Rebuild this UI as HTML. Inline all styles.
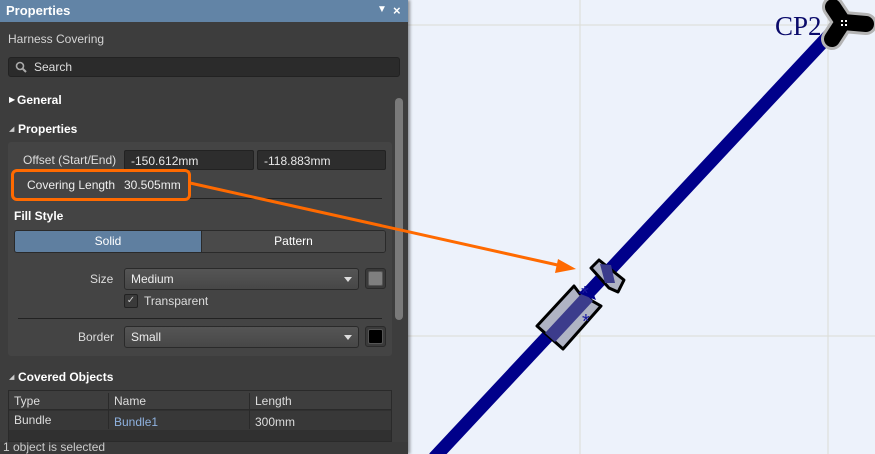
<!DOCTYPE html>
<html><head><meta charset="utf-8"><style>
*{margin:0;padding:0;box-sizing:border-box}
body{width:875px;height:454px;overflow:hidden;position:relative;background:#edf2fb;font-family:"Liberation Sans",sans-serif;font-size:12px;color:#ddd}
.a{position:absolute;white-space:nowrap}
.b{font-weight:bold;color:#fff}
.inp{position:absolute;background:#2d2d2d;border:1px solid #222;border-radius:2px;color:#e8e8e8;padding:3px 6px;font-size:12px}
.dd{position:absolute;background:linear-gradient(#555,#474747);border:1px solid #2a2a2a;border-radius:3px;color:#eee;padding:3px 6px;height:22px}
.dd:after{content:"";position:absolute;right:6px;top:8px;border:4px solid transparent;border-top:5px solid #ddd}
.sw{position:absolute;width:21px;height:21px;border:1px solid #2a2a2a;border-radius:3px;background:#3a3a3a;padding:2px}
.sw div{width:100%;height:100%;border:1px solid #555;border-radius:2px}
</style></head><body>
<svg class="a" style="left:0;top:0" width="875" height="454">
<line x1="580" y1="0" x2="580" y2="454" stroke="#dcdcd6" stroke-width="1"/>
<line x1="828" y1="0" x2="828" y2="454" stroke="#dcdcd6" stroke-width="1"/>
<line x1="408" y1="25" x2="875" y2="25" stroke="#dcdcd6" stroke-width="1"/>
<line x1="408" y1="336" x2="875" y2="336" stroke="#dcdcd6" stroke-width="1"/>
<line x1="434" y1="458" x2="834" y2="30" stroke="#00008a" stroke-width="13"/>
<polygon points="537,326 574,286 580,294 601,306 563,349" fill="#b0b4c4" stroke="#000" stroke-width="3" stroke-linejoin="round"/>
<polygon points="545,333 583,292 593,301 555,342" fill="#3c3c8c"/>
<polygon points="578,293 590,285 596,300" fill="#00008a"/>
<polygon points="591,268 599,260 624,280 618,292 609,288" fill="#b0b4c4" stroke="#000" stroke-width="3" stroke-linejoin="round"/>
<polygon points="600,264 611,265 615,283 605,283" fill="#3c3c8c"/>
<text x="581" y="300" fill="#1a1aa0" font-size="20" font-family="Liberation Sans">*</text>
<text x="582" y="328" fill="#1a1aa0" font-size="20" font-family="Liberation Sans">*</text>
<text x="775" y="35" fill="#0a0a6a" font-size="27" font-family="Liberation Serif">CP2</text>
<g stroke-linecap="round" fill="none">
<path d="M843,22 L833,7 M843,22 L866,24 M843,22 L832,39" stroke="#b4b4b4" stroke-width="22"/>
<path d="M843,22 L833,7 M843,22 L866,24 M843,22 L832,39" stroke="#000" stroke-width="16"/>
</g>
<rect x="841" y="20" width="2" height="2" fill="#fff"/><rect x="845" y="20" width="2" height="2" fill="#fff"/><rect x="841" y="24" width="2" height="2" fill="#fff"/><rect x="845" y="24" width="2" height="2" fill="#fff"/>
</svg>
<div class="a" style="left:0;top:0;width:408px;height:454px;background:#3d3d3d;box-shadow:2px 0 3px rgba(0,0,0,.4)"></div>
<div class="a" style="left:0;top:0;width:408px;height:22px;background:#6284a6"></div>
<div class="a b" style="left:6px;top:3px;font-size:13px">Properties</div>
<div class="a" style="left:377px;top:4px;color:#fff;font-size:10px">▼</div>
<div class="a b" style="left:393px;top:3px;font-size:13px">×</div>
<div class="a" style="left:8px;top:32px;color:#d4d4d4">Harness Covering</div>
<div class="a" style="left:8px;top:57px;width:392px;height:20px;background:#2b2b2b;border:1px solid #222;border-radius:3px"></div>
<svg class="a" style="left:15px;top:61px" width="12" height="12"><circle cx="5" cy="5" r="3.5" fill="none" stroke="#aaa" stroke-width="1.6"/><line x1="7.5" y1="7.5" x2="11" y2="11" stroke="#aaa" stroke-width="2"/></svg>
<div class="a" style="left:34px;top:60px;color:#ddd">Search</div>
<div class="a" style="left:395px;top:98px;width:8px;height:222px;background:#7a7a7a;border-radius:4px"></div>
<div class="a" style="left:9px;top:95px;font-size:8px;color:#fff">▶</div>
<div class="a b" style="left:17px;top:93px">General</div>
<div class="a" style="left:9px;top:125px;font-size:7px;color:#ccc">◢</div>
<div class="a b" style="left:18px;top:122px">Properties</div>
<div class="a" style="left:8px;top:142px;width:384px;height:214px;background:#444;border-radius:3px"></div>
<div class="a" style="left:23px;top:153px;color:#ddd">Offset (Start/End)</div>
<div class="inp" style="left:124px;top:150px;width:130px;height:20px">-150.612mm</div>
<div class="inp" style="left:257px;top:150px;width:129px;height:20px">-118.883mm</div>
<div class="a" style="left:27px;top:178px;color:#eee">Covering Length</div>
<div class="a" style="left:124px;top:178px;color:#eee">30.505mm</div>
<div class="a" style="left:18px;top:198px;width:364px;height:1px;background:#222"></div>
<div class="a" style="left:11px;top:169px;width:180px;height:32px;border:3px solid #ff6a00;border-radius:6px"></div>
<div class="a b" style="left:14px;top:209px">Fill Style</div>
<div class="a" style="left:14px;top:230px;width:372px;height:23px;border:1px solid #2a2a2a;border-radius:3px;overflow:hidden">
<div style="float:left;width:186px;height:100%;background:#5f7fa0;text-align:center;line-height:21px;color:#fff">Solid</div>
<div style="float:left;width:184px;height:100%;background:#4a4a4a;text-align:center;line-height:21px;color:#fff;border-left:1px solid #2a2a2a">Pattern</div></div>
<div class="a" style="left:90px;top:272px;color:#ddd">Size</div>
<div class="dd" style="left:124px;top:268px;width:235px">Medium</div>
<div class="sw" style="left:365px;top:268px"><div style="background:#7f7f7f"></div></div>
<div class="a" style="left:124px;top:294px;width:14px;height:14px;border:1px solid #222;border-radius:2px;background:#3a3a3a;color:#ccc;font-size:10px;line-height:12px;text-align:center">✓</div>
<div class="a" style="left:144px;top:294px;color:#ddd">Transparent</div>
<div class="a" style="left:18px;top:318px;width:364px;height:1px;background:#222"></div>
<div class="a" style="left:78px;top:330px;color:#ddd">Border</div>
<div class="dd" style="left:124px;top:326px;width:235px">Small</div>
<div class="sw" style="left:365px;top:326px"><div style="background:#000"></div></div>
<div class="a" style="left:9px;top:373px;font-size:7px;color:#ccc">◢</div>
<div class="a b" style="left:18px;top:370px">Covered Objects</div>
<div class="a" style="left:8px;top:390px;width:384px;height:52px;background:#303030;border:1px solid #2a2a2a"></div>
<div class="a" style="left:9px;top:391px;width:382px;height:19px;background:#3e3e3e;border-bottom:1px solid #2a2a2a"></div>
<div class="a" style="left:9px;top:411px;width:382px;height:19px;background:#383838"></div>
<div class="a" style="left:108px;top:393px;width:1px;height:36px;background:#2a2a2a"></div>
<div class="a" style="left:249px;top:393px;width:1px;height:36px;background:#2a2a2a"></div>
<div class="a" style="left:14px;top:394px;color:#ddd">Type</div>
<div class="a" style="left:114px;top:394px;color:#ddd">Name</div>
<div class="a" style="left:255px;top:394px;color:#ddd">Length</div>
<div class="a" style="left:14px;top:413px;color:#ddd">Bundle</div>
<div class="a" style="left:114px;top:415px;color:#8fb2e0">Bundle1</div>
<div class="a" style="left:255px;top:415px;color:#ddd">300mm</div>
<div class="a" style="left:0;top:442px;width:408px;height:12px;background:#3a3a3a"></div>
<div class="a" style="left:3px;top:440px;color:#ccc">1 object is selected</div>
<svg class="a" style="left:0;top:0" width="875" height="454">
<line x1="190" y1="183" x2="562" y2="266" stroke="#ff6a00" stroke-width="3"/>
<polygon points="576,269 558,259 555,273" fill="#ff6a00"/>
</svg>
</body></html>
